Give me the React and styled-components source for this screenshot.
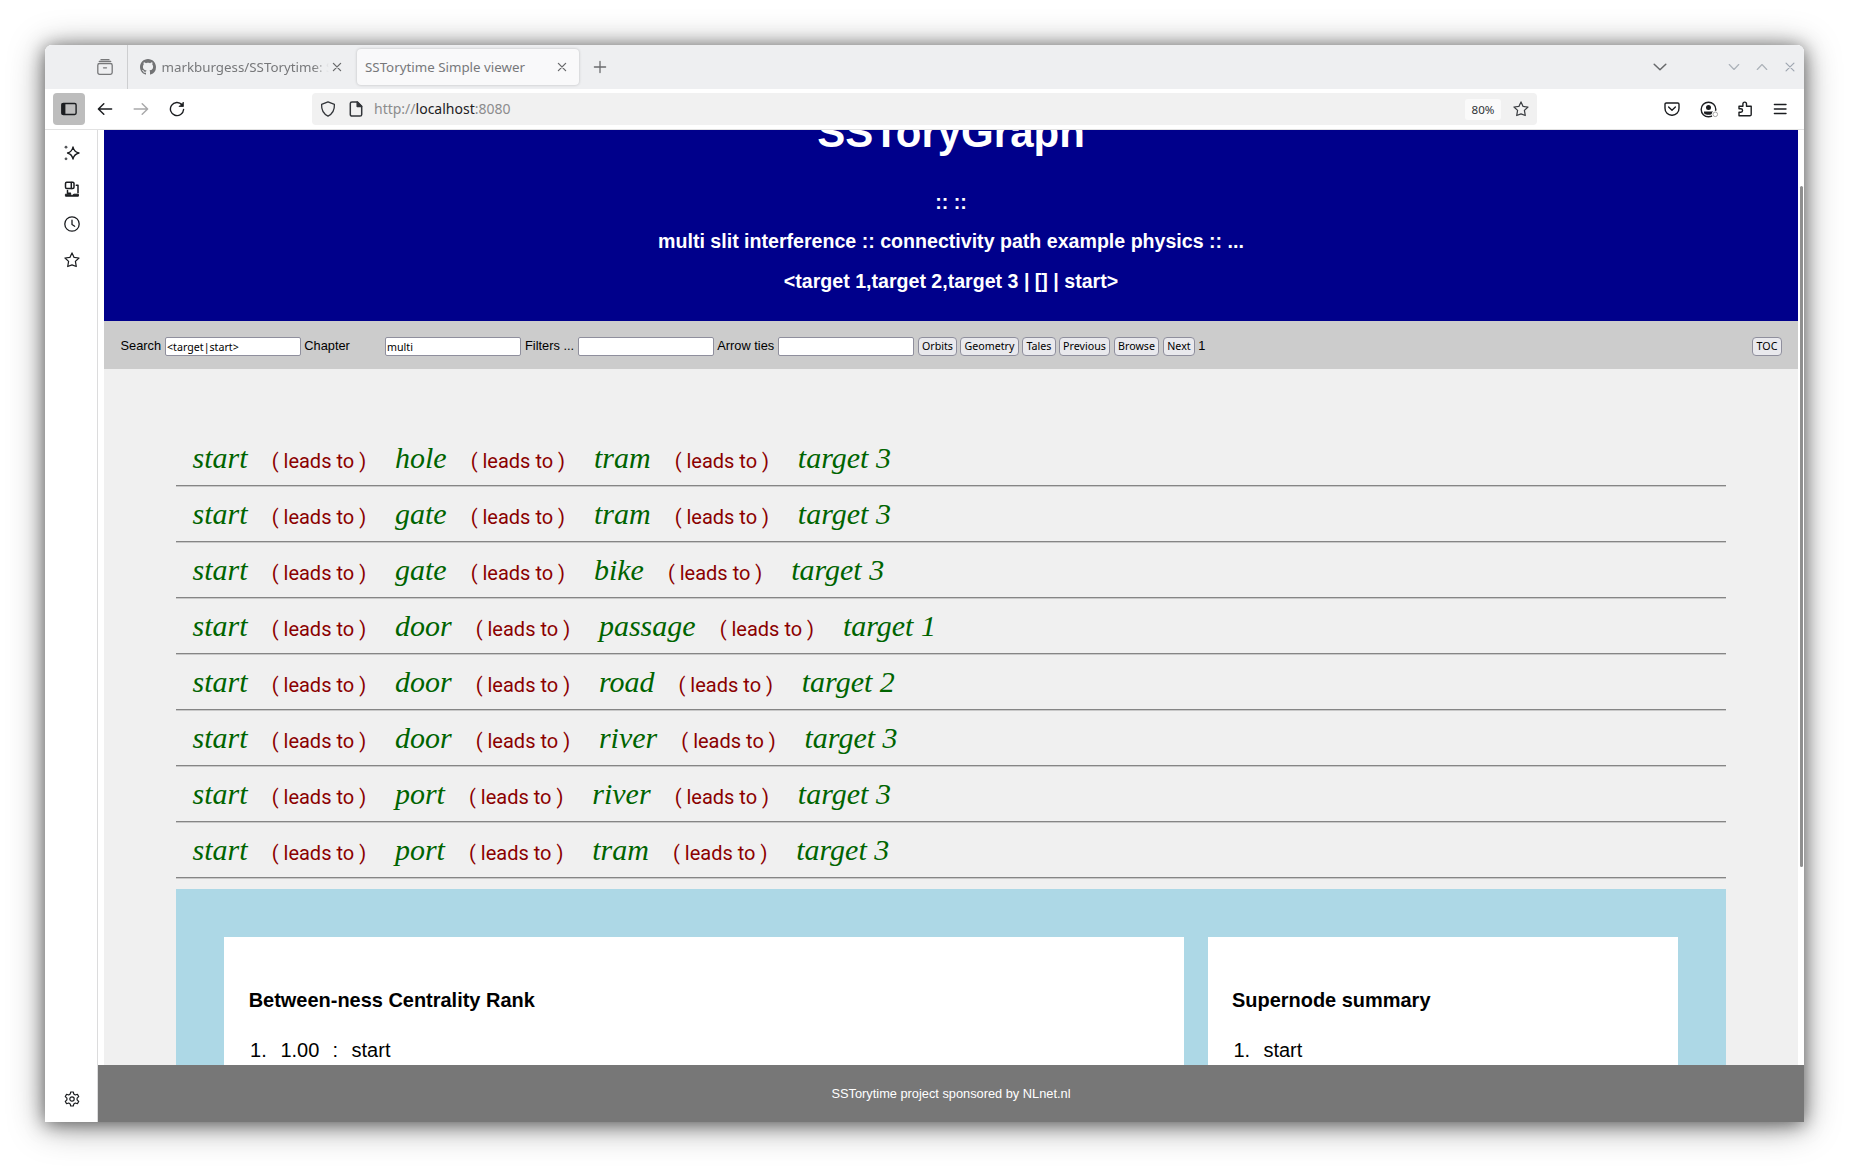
import React from "react";
import styled, { createGlobalStyle } from "styled-components";

const Global = createGlobalStyle`
  body { margin: 0; background: #fff; }
  * { box-sizing: border-box; }
`;

const ui = `"Noto Sans", sans-serif`;
const sans = `"Liberation Sans", Arial, sans-serif`;

const Desktop = styled.div`
  width: 1849px; height: 1167px; padding: 45px;
  overflow: hidden; background: #fff;
`;
const Window = styled.div`
  width: 1759px; height: 1077px;
  display: flex; flex-direction: column; overflow: hidden;
  background: #fff; border-radius: 7px 7px 0 0;
`;
const Shadow = styled.div`
  border-radius: 7px 7px 0 0; width: 1759px;
  box-shadow: 0 4px 36px rgba(0,0,0,.38), 0 2px 18px rgba(0,0,0,.5);
`;
const TabBar = styled.div`
  height: 44px; flex: none; display: flex; align-items: center;
  background: #eeeff1; font: 13.33px/20px ${ui}; color: #77787a;
`;
const LibraryCell = styled.div`
  width: 83px; height: 44px; padding-left: 52px; display: flex; align-items: center;
  border-right: 1px solid #cdced0;
`;
const Tab = styled.div`
  width: ${p => p.$w}px; height: 36px; margin-left: ${p => p.$gap}px;
  padding: 0 9px 0 8px; display: flex; align-items: center;
  border-radius: 4px; background: ${p => (p.$active ? "#f9f9fa" : "transparent")};
  box-shadow: ${p => (p.$active ? "0 0 3px rgba(0,0,0,.22)" : "none")};
`;
const TabTitle = styled.span`
  flex: 1; margin-left: ${p => p.$left}px; white-space: nowrap; overflow: hidden;
  mask-image: ${p => (p.$fade ? "linear-gradient(to left, transparent 0, #000 16px)" : "none")};
`;
const WindowControls = styled.div`
  margin-left: auto; padding-right: 7px; display: flex; align-items: center;
`;
const Slot = styled.span`
  display: flex; margin-left: ${p => p.$l || 0}px;
`;
const NavBar = styled.div`
  height: 41px; flex: none; display: flex; align-items: center;
  padding-left: 8px; border-bottom: 1px solid #e2e2e2;
`;
const SideToggle = styled.div`
  width: 32px; height: 32px; border-radius: 4px; background: #bdbdbd;
  display: flex; align-items: center; justify-content: center;
`;
const UrlBar = styled.div`
  width: 1225px; height: 32px; margin-left: 127px; padding: 0 8px;
  display: flex; align-items: center; border-radius: 4px; background: #f1f1f1;
  font: 14px/20px ${ui}; color: #8c8c8d;
  b { font-weight: 400; color: #1d2023; }
`;
const Url = styled.span` margin-left: 10px; flex: 1; `;
const Zoom = styled.span`
  width: 36px; height: 21px; border-radius: 3px; background: #fafafa; color: #2f3236;
  font: 11.6px/22px ${ui}; text-align: center; margin-right: 12px;
`;
const Body = styled.div` flex: 1; min-height: 0; display: flex; `;
const Sidebar = styled.div`
  width: 53px; border-right: 1px solid #dcdcdd; padding: 15px 0 15px 2px;
  display: flex; flex-direction: column; align-items: center; gap: 19.7px;
`;
const Bottom = styled.div` margin-top: auto; display: flex; `;
const Viewport = styled.div`
  flex: 1; min-width: 0; display: flex; flex-direction: column; font-family: ${sans};
`;
const Scroller = styled.div` height: 935px; flex: none; display: flex; overflow: hidden; `;
const Page = styled.div` width: 1694px; margin-left: 6px; flex: none; background: #f0f0f0; `;
const ScrollTrack = styled.div` padding: 56px 0 0 2px; `;
const ScrollThumb = styled.div` width: 3px; height: 681px; border-radius: 2px; background: #8f8f8f; `;
const Hero = styled.header`
  height: 191px; overflow: hidden; background: #00008b; color: #fff; text-align: center;
  display: flex; flex-direction: column; align-items: center;
`;
const Title = styled.h1`
  margin: -21px 0 0; font-size: 42px; line-height: 48px; font-weight: 700; flex: none;
`;
const Sub = styled.h3`
  margin: ${p => p.$mt}px 0 0; font-size: 19.6px; line-height: 24px; font-weight: 700; flex: none;
`;
const Form = styled.form`
  height: 48px; padding: 0 16px 0 16.5px; display: flex; align-items: center;
  background: #ccc; color: #000; font-size: 12.8px; white-space: nowrap;
`;
const Label = styled.label` width: ${p => p.$w}px; flex: none; `;
const Input = styled.input`
  width: 136px; height: 19px; padding: 0 1px; margin: 3px ${p => p.$mr}px 0 0; flex: none;
  border: 1px solid #8f8f9d; border-radius: 2px; background: #fff; color: #000;
  font: 10.67px/15px ${ui};
`;
const Button = styled.button`
  width: ${p => p.$w}px; height: 19px; padding: 0; margin: 3px ${p => p.$mr}px 0 0; flex: none;
  border: 1px solid #8f8f9d; border-radius: 4px; background: #e9e9ed; color: #000;
  font: 10.67px/15px ${ui};
`;
const Push = styled.span` flex: 1; `;
const Content = styled.main` padding: 62px 72px 0; `;
const Path = styled.div`
  height: 56px; padding: 0 0 2px 16.6px; display: flex; align-items: baseline; white-space: pre;
  border-bottom: 1px solid #c9c9c9; box-shadow: inset 0 -1px 0 #858585;
`;
const Node = styled.i`
  font: italic 30px/54px "Liberation Serif", "Times New Roman", serif; color: #006400;
`;
const Arrow = styled.span`
  margin: 0 28.8px 0 24.1px; font: 20px/54px Roboto, sans-serif; color: #8b0000;
`;
const Panel = styled.section`
  margin-top: 10px; padding: 48px; display: flex; gap: 24px; background: #add8e6; height: 400px;
`;
const Card = styled.div`
  width: ${p => p.$w}px; flex: none; background: #fff; padding: 51px 24px 0 ${p => p.$left}px; color: #000;
`;
const CardTitle = styled.h3` margin: 0; font-size: 19.97px; line-height: 24px; `;
const Entry = styled.div`
  margin-top: 26px; padding-left: 1.4px; font-size: 20px; line-height: 24px; display: flex;
`;
const Cell = styled.span` width: ${p => p.$w}px; `;
const Footer = styled.footer`
  flex: 1; display: flex; align-items: center; justify-content: center;
  background: #777; color: #fff; font-size: 12.8px;
`;

const Icon = ({ s = 16, c = "#1b1d20", w = 1.3, children }) => (
  <svg width={s} height={s} viewBox="0 0 16 16" fill="none" stroke={c} strokeWidth={w}
    strokeLinecap="round" strokeLinejoin="round">{children}</svg>
);
const Star = ({ c }) => (
  <Icon c={c} w={1.25}><path d="M8 .9l2.1 4.5 4.9.6-3.6 3.4.9 5.1L8 12.9l-4.3 1.600.9-5.1L1 6l4.9-.6z" /></Icon>
);
const Close = ({ c = "#6a6b6d", s = 16 }) => <Icon c={c} s={s} w={1.3}><path d="M4.4 4.4l7.2 7.2M11.6 4.4l-7.2 7.2" /></Icon>;

const paths = [
  ["start", "hole", "tram", "target 3"],
  ["start", "gate", "tram", "target 3"],
  ["start", "gate", "bike", "target 3"],
  ["start", "door", "passage", "target 1"],
  ["start", "door", "road", "target 2"],
  ["start", "door", "river", "target 3"],
  ["start", "port", "river", "target 3"],
  ["start", "port", "tram", "target 3"],
];

export default function App() {
  return (
    <Desktop>
      <Global />
      <Shadow>
        <Window>
          <TabBar>
            <LibraryCell>
              <Icon c="#77787a" w={1.3}><rect x=".8" y="4.500" width="14.4" height="10.8" rx="1.8" /><path d="M2.200 2.300h11.600M4 .7h8M6.500 8.800h3" /></Icon>
            </LibraryCell>
            <Tab $w={222} $gap={4}>
              <svg width="16" height="16" viewBox="0 0 16 16" fill="#727375"><path d="M8 0C3.58 0 0 3.58 0 8c0 3.54 2.29 6.53 5.47 7.59.4.07.55-.17.55-.38 0-.19-.01-.82-.01-1.49-2.01.37-2.53-.49-2.69-.94-.09-.23-.48-.94-.82-1.13-.28-.15-.68-.52-.01-.53.63-.01 1.08.58 1.23.82.72 1.21 1.87.87 2.33.66.07-.52.28-.87.51-1.07-1.78-.2-3.64-.89-3.64-3.95 0-.87.31-1.59.82-2.15-.08-.2-.36-1.02.08-2.12 0 0 .67-.21 2.2.82.64-.18 1.32-.27 2-.27s1.36.09 2 .27c1.53-1.04 2.2-.82 2.2-.82.44 1.1.16 1.92.08 2.12.51.56.82 1.27.82 2.15 0 3.07-1.87 3.75-3.65 3.95.29.25.54.73.54 1.48 0 1.07-.01 1.93-.01 2.2 0 .21.15.46.55.38A8.01 8.01 0 0016 8c0-4.42-3.58-8-8-8z" /></svg>
              <TabTitle $left={5.500} $fade>markburgess/SSTorytime: S</TabTitle>
              <Close />
            </Tab>
            <Tab $w={222} $gap={3} $active>
              <TabTitle $left={0}>SSTorytime Simple viewer</TabTitle>
              <Close />
            </Tab>
            <Slot $l={12.500}><Icon c="#6a6b6d" w={1.3}><path d="M8 2.4v11.2M2.4 8h11.2" /></Icon></Slot>
            <WindowControls>
              <Icon c="#67696b" w={1.5}><path d="M2.2 5.2L8 10.8l5.800-5.600" /></Icon>
              <Slot $l={59}><Icon c="#adb3ba" s={14} w={1.4}><path d="M2.6 5.2L8 10.8l5.4-5.6" /></Icon></Slot>
              <Slot $l={14}><Icon c="#adb3ba" s={14} w={1.4}><path d="M2.6 10.800L8 5.200l5.400 5.600" /></Icon></Slot>
              <Slot $l={14}><Icon c="#a0a8b2" s={14} w={1.4}><path d="M3.5 3.5l9 9M12.5 3.5l-9 9" /></Icon></Slot>
            </WindowControls>
          </TabBar>
          <NavBar>
            <SideToggle><Icon w={1.4}><rect x=".9" y="2.5" width="14.2" height="11" rx="1.4" /><path d="M1.2 3h2.500v10H1.200z" fill="#1b1d20" /></Icon></SideToggle>
            <Slot $l={12}><Icon w={1.5}><path d="M14.600 8H1.6M6.800 2.800L1.4 8l5.400 5.200" /></Icon></Slot>
            <Slot $l={20}><Icon c="#a9a9aa" w={1.5}><path d="M1.200 8h13.200M9.200 2.800L14.6 8l-5.400 5.200" /></Icon></Slot>
            <Slot $l={20}><Icon w={1.4}><path d="M13 3.700A6.600 6.600 0 1 0 14.600 8.500" /><path d="M14.400 1.500v4h-4z" fill="#1b1d20" strokeWidth=".8" /></Icon></Slot>
            <UrlBar>
              <Icon c="#33363a"><path d="M8 .8l6.400 2.500c.3 5.200-1.500 9.400-6.400 11.900C3.100 12.700 1.300 8.500 1.600 3.300z" /></Icon>
              <Slot $l={12}><Icon c="#33363a" w={1.5}><path d="M9.500.9H4A1.700 1.700 0 0 0 2.300 2.600v10.800A1.700 1.700 0 0 0 4 15.100h8a1.700 1.700 0 0 0 1.700-1.700V5.200z" /><path d="M9.200 1v4.500h4.400z" fill="#33363a" /></Icon></Slot>
              <Url>http://<b>localhost</b>:8080</Url>
              <Zoom>80%</Zoom>
              <Star c="#3b3e42" />
            </UrlBar>
            <Slot $l={127}><Icon w={1.4}><path d="M2.300 2h11.400c.8 0 1.300.5 1.300 1.300v4A6.700 6.700 0 0 1 8 14.200a6.700 6.700 0 0 1-7-6.900v-4C1 2.500 1.500 2 2.300 2z" /><path d="M4.600 6L8 9.200 11.400 6" /></Icon></Slot>
            <Slot $l={19.500}>
              <svg width="19" height="17" viewBox="0 0 19 17" fill="none">
                <circle cx="8.500" cy="8.500" r="7.300" stroke="#1b1d20" strokeWidth="1.400" />
                <circle cx="8.500" cy="6.500" r="2.500" fill="#1b1d20" />
                <path d="M4 10.500h9v1.800c-2 2-7 2-9 0z" fill="#1b1d20" />
                <circle cx="15.300" cy="13.300" r="3.600" fill="#fff" /><circle cx="15.300" cy="13.300" r="2.300" stroke="#a5a5a5" />
              </svg>
            </Slot>
            <Slot $l={18}><Icon w={1.4}><path d="M2 14.800V11.300h1.800a1.700 1.700 0 0 0 0-3.500H2V5.200h3.900V2.900a1.800 1.800 0 0 1 3.600 0v2.300h4.700v8.300c0 .8-.5 1.300-1.300 1.300z" /></Icon></Slot>
            <Slot $l={19.500}><Icon w={1.4}><path d="M2.400 3.500h11.600M2.400 8h11.600M2.400 12.500h11.600" /></Icon></Slot>
          </NavBar>
          <Body>
            <Sidebar>
              <Icon w={1.300}><path d="M9 1.800c.7 3.700 2.200 5.300 6 6.200-3.800.9-5.300 2.500-6 6.200-.7-3.700-2.200-5.300-5.500-6.200C6.800 7.100 8.300 5.500 9 1.800z" /><circle cx="2" cy="2.200" r="1.400" fill="#55585b" stroke="none" /><circle cx="2" cy="13.800" r="1.400" fill="#55585b" stroke="none" /></Icon>
              <Icon w={1.500}><rect x="1.500" y="1.300" width="8.500" height="6.200" rx="1.200" /><path d="M7.300 1.500v6M12.300 4.300h1.700v7.500M3.500 9.500v2.800h3" /><path d="M1.800 13.200h4.500l1 1h1.500l1-1h4.600v2H1.800z" fill="#1b1d20" strokeWidth="1" /></Icon>
              <Icon><circle cx="8" cy="8" r="7.200" /><path d="M8 4.200v4.300l2.700 1.700" /></Icon>
              <Star c="#1b1d20" />
              <Bottom><Icon w={1.200}><circle cx="8" cy="8" r="2.200" /><path d="M6.700 1h2.600l.5 2.100 1.500.9 2.100-.7 1.300 2.300-1.600 1.500v1.800l1.600 1.500-1.300 2.300-2.100-.7-1.500.9L9.300 15H6.700l-.5-2.100-1.500-.9-2.100.7-1.300-2.300 1.600-1.500V7.100L1.300 5.600l1.300-2.300 2.100.7 1.500-.9z" /></Icon></Bottom>
            </Sidebar>
            <Viewport>
              <Scroller>
                <Page>
                  <Hero>
                    <Title>SSToryGraph</Title>
                    <Sub $mt={33}>:: ::</Sub>
                    <Sub $mt={15}>multi slit interference :: connectivity path example physics :: ...</Sub>
                    <Sub $mt={16}>&lt;target 1,target 2,target 3 | [] | start&gt;</Sub>
                  </Hero>
                  <Form onSubmit={e => e.preventDefault()}>
                    <Label $w={44.500}>Search</Label><Input $mr={3.300} defaultValue="<target|start>" />
                    <Label $w={80.700}>Chapter</Label><Input $mr={4} defaultValue="multi" />
                    <Label $w={53}>Filters ...</Label><Input $mr={3.300} />
                    <Label $w={60.700}>Arrow ties</Label><Input $mr={4} />
                    <Button $w={39} $mr={3}>Orbits</Button>
                    <Button $w={59} $mr={3}>Geometry</Button>
                    <Button $w={34} $mr={3}>Tales</Button>
                    <Button $w={51} $mr={4}>Previous</Button>
                    <Button $w={45} $mr={4}>Browse</Button>
                    <Button $w={32} $mr={3.300}>Next</Button>
                    1
                    <Push />
                    <Button $w={30} $mr={0}>TOC</Button>
                  </Form>
                  <Content>
                    {paths.map((nodes, i) => (
                      <Path key={i}>
                        {nodes.map((n, j) => (
                          <React.Fragment key={j}>
                            {j > 0 && <Arrow>( leads to )</Arrow>}
                            <Node>{n}</Node>
                          </React.Fragment>
                        ))}
                      </Path>
                    ))}
                    <Panel>
                      <Card $w={960} $left={24.700}>
                        <CardTitle>Between-ness Centrality Rank</CardTitle>
                        <Entry><Cell $w={30.300}>1.</Cell><Cell $w={52}>1.00</Cell><Cell $w={19.200}>:</Cell>start</Entry>
                      </Card>
                      <Card $w={470} $left={24}>
                        <CardTitle>Supernode summary</CardTitle>
                        <Entry><Cell $w={30}>1.</Cell>start</Entry>
                      </Card>
                    </Panel>
                  </Content>
                </Page>
                <ScrollTrack><ScrollThumb /></ScrollTrack>
              </Scroller>
              <Footer>SSTorytime project sponsored by NLnet.nl</Footer>
            </Viewport>
          </Body>
        </Window>
      </Shadow>
    </Desktop>
  );
}
